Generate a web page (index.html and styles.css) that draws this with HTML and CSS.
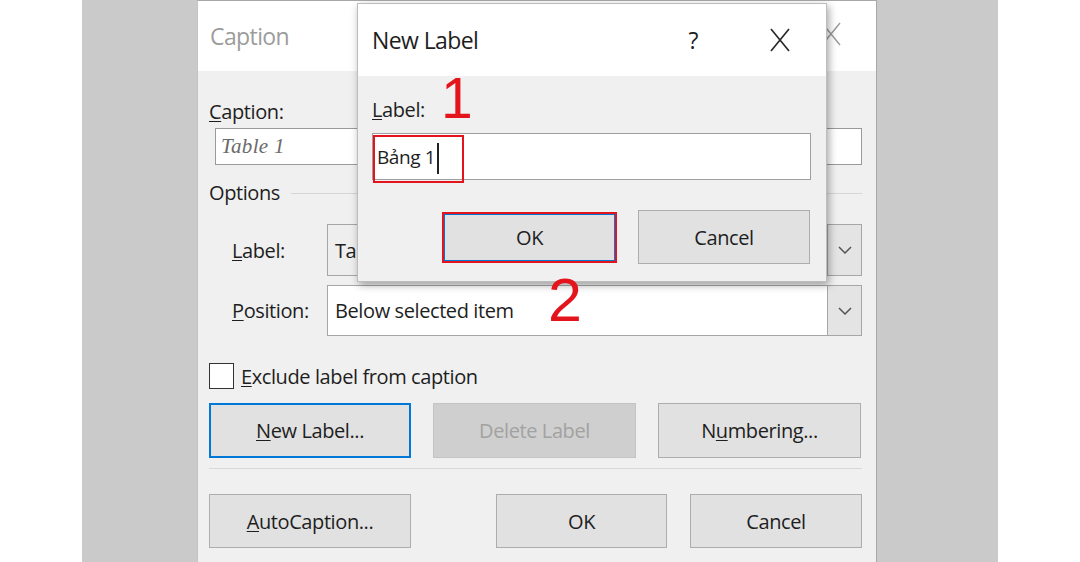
FILE: index.html
```html
<!DOCTYPE html>
<html lang="vi">
<head>
<meta charset="utf-8">
<title>Caption - New Label</title>
<link rel="stylesheet" href="styles.css">
</head>
<body>
<div class="stage">
  <div class="caption-dlg">
    <div class="titlebar">
      <span class="title title-muted">Caption</span>
      <svg class="close close-muted" viewBox="0 0 20 24" width="20" height="24"><path d="M1 1L19 23M19 1L1 23"/></svg>
    </div>
    <div class="dlg-body">
      <div class="line-lbl"><u>C</u>aption:</div>
      <div class="textbox"><span class="serif">Table 1</span></div>
      <div class="group"><span>Options</span><span class="rule"></span></div>
      <div class="field-row row-label">
        <span class="field-lbl"><u>L</u>abel:</span>
        <div class="combo combo-gray"><span class="combo-text">Table</span><span class="drop"><svg viewBox="0 0 14 8" width="14" height="8"><path d="M1 1l6 6 6-6"/></svg></span></div>
      </div>
      <div class="field-row row-pos">
        <span class="field-lbl"><u>P</u>osition:</span>
        <div class="combo"><span class="combo-text">Below selected item</span><span class="drop"><svg viewBox="0 0 14 8" width="14" height="8"><path d="M1 1l6 6 6-6"/></svg></span></div>
      </div>
      <div class="check-row"><span class="checkbox"></span><span><u>E</u>xclude label from caption</span></div>
      <div class="btn-grid">
        <div class="btn btn-focus"><span><u>N</u>ew Label...</span></div>
        <div class="btn btn-disabled"><span>Delete Label</span></div>
        <div class="btn"><span>N<u>u</u>mbering...</span></div>
      </div>
      <div class="sep"></div>
      <div class="btn-row2">
        <div class="btn btn-auto"><span><u>A</u>utoCaption...</span></div>
        <div class="btn btn-ok2"><span>OK</span></div>
        <div class="btn btn-cancel2"><span>Cancel</span></div>
      </div>
    </div>

    <div class="newlabel-dlg">
      <div class="nl-titlebar">
        <span class="title">New Label</span>
        <span class="help">?</span>
        <svg class="close" viewBox="0 0 20 24" width="20" height="24"><path d="M1 1L19 23M19 1L1 23"/></svg>
      </div>
      <div class="nl-body">
        <div class="line-lbl"><u>L</u>abel:</div>
        <div class="nl-input">
          <span class="nl-value">Bảng 1<span class="caret"></span></span>
          <span class="anno-box"></span>
        </div>
        <div class="nl-buttons">
          <div class="btn nl-ok"><span>OK</span></div>
          <div class="btn nl-cancel"><span>Cancel</span></div>
        </div>
      </div>
      <span class="anno anno-1">1</span>
    </div>
    <span class="anno anno-2">2</span>
  </div>
</div>
</body>
</html>
```

FILE: styles.css
```css
* { box-sizing: border-box; }
html, body { margin: 0; padding: 0; background: #ffffff; }
body {
  width: 1080px;
  height: 562px;
  overflow: hidden;
  font-family: "Open Sans", "Noto Sans", sans-serif;
  font-size: 20px;
  letter-spacing: -0.4px;
  color: #1e1e1e;
}
u { text-decoration-thickness: 1px; text-underline-offset: 2px; }

.stage {
  margin-left: 82px;
  width: 916px;
  height: 562px;
  background: #cacaca;
  overflow: hidden;
}

.caption-dlg {
  position: relative;
  margin-left: 115px;
  width: 680px;
  height: 600px;
  background: #f0f0f0;
  border-top: 1px solid #a8a8a8;
  border-left: 1px solid #c4c4c4;
  border-right: 1px solid #a8a8a8;
}

.titlebar {
  height: 70px;
  background: #ffffff;
  display: flex;
  align-items: center;
  padding: 0 35px 0 12px;
}
.title {
  flex: 1;
  font-size: 23px;
  letter-spacing: -0.6px;
  line-height: 30px;
}
.title-muted { color: #9c9c9c; }
.close { flex: none; fill: none; stroke: #2a2a2a; stroke-width: 1.7; }
.close-muted { stroke: #9a9a9a; stroke-width: 1.4; margin-top: -4px; }

.dlg-body { padding: 0 14px 0 11px; }

.line-lbl { line-height: 26px; margin-top: 28px; height: 26px; }

.textbox {
  margin-top: 3px;
  margin-left: 6px;
  height: 37px;
  background: #ffffff;
  border: 1px solid #9a9a9a;
  display: flex;
  align-items: center;
  padding-left: 5px;
}
.serif {
  font-family: "Liberation Serif", serif;
  font-style: italic;
  font-size: 21px;
  letter-spacing: 0.3px;
  color: #6a6a6a;
}

.group {
  margin-top: 15px;
  height: 26px;
  line-height: 26px;
  display: flex;
  align-items: center;
}
.rule { flex: 1; height: 1px; background: #d6d6d6; margin-left: 11px; }

.field-row { display: flex; align-items: center; }
.row-label { margin-top: 18px; height: 52px; }
.row-pos { margin-top: 9px; height: 51px; }
.field-lbl { width: 118px; padding-left: 23px; flex: none; }

.combo {
  flex: 1;
  height: 100%;
  display: flex;
  background: #ffffff;
  border: 1px solid #a6a6a6;
}
.combo-gray { background: #eeeeee; }
.combo-text { flex: 1; padding-left: 7px; display: flex; align-items: center; }
.drop {
  width: 34px;
  flex: none;
  background: #e4e4e4;
  border-left: 1px solid #a6a6a6;
  display: flex;
  align-items: center;
  justify-content: center;
}
.drop svg { fill: none; stroke: #555555; stroke-width: 1.5; }

.check-row {
  margin-top: 27px;
  height: 26px;
  display: flex;
  align-items: center;
  gap: 7px;
}
.checkbox {
  width: 25px;
  height: 26px;
  background: #ffffff;
  border: 1px solid #333333;
  flex: none;
}

.btn {
  background: #e1e1e1;
  border: 1px solid #adadad;
  display: flex;
  align-items: center;
  justify-content: center;
}

.btn-grid {
  margin-top: 14px;
  height: 55px;
  display: grid;
  grid-template-columns: 202px 203px 203px;
  column-gap: 22px;
}
.btn-focus { border: 2px solid #0078d7; }
.btn-disabled { background: #cfcfcf; border-color: #c4c4c4; color: #a2a2a2; }

.sep { margin-top: 10px; height: 1px; background: #d8d8d8; }

.btn-row2 {
  margin-top: 25px;
  height: 54px;
  display: flex;
}
.btn-auto { width: 202px; }
.btn-ok2 { width: 171px; margin-left: 85px; }
.btn-cancel2 { width: 172px; margin-left: 23px; }

.newlabel-dlg {
  position: absolute;
  left: 159px;
  top: 2px;
  width: 470px;
  height: 279px;
  background: #f0f0f0;
  border: 1px solid #bdbdbd;
  box-shadow: 2px 3px 8px rgba(0, 0, 0, 0.35);
  z-index: 2;
}
.nl-titlebar {
  height: 72px;
  background: #ffffff;
  display: flex;
  align-items: center;
  padding: 0 36px 0 14px;
}
.help {
  font-size: 23px;
  margin-right: 72px;
  line-height: 30px;
}
.nl-body { padding: 0 15px 0 14px; }
.nl-body .line-lbl { margin-top: 21px; }

.nl-input {
  position: relative;
  margin-top: 10px;
  height: 47px;
  background: #ffffff;
  border: 1px solid #9e9e9e;
  display: flex;
  align-items: center;
  padding-left: 4px;
}
.nl-value { display: inline-flex; align-items: center; font-size: 19px; }
.caret {
  display: inline-block;
  width: 2px;
  height: 31px;
  background: #222222;
  margin-left: 2px;
  margin-top: 4px;
}
.anno-box {
  position: absolute;
  left: 0;
  top: 1px;
  width: 91px;
  height: 48px;
  border: 2px solid #e3141c;
}

.nl-buttons {
  margin-top: 30px;
  display: flex;
  align-items: center;
  justify-content: flex-end;
}
.nl-ok {
  width: 175px;
  height: 51px;
  border: 2px solid #e3141c;
  box-shadow: inset 0 0 0 1px #0078d7;
  margin-right: 21px;
}
.nl-cancel { width: 172px; height: 54px; margin-right: 1px; }

.anno {
  position: absolute;
  font-family: "Liberation Sans", Arial, sans-serif;
  color: #e3141c;
  line-height: 1;
  letter-spacing: 0;
  z-index: 3;
}
.anno-1 { font-size: 57px; left: 83px; top: 66px; }
.anno-2 { font-size: 61px; left: 350px; top: 269px; }
```
